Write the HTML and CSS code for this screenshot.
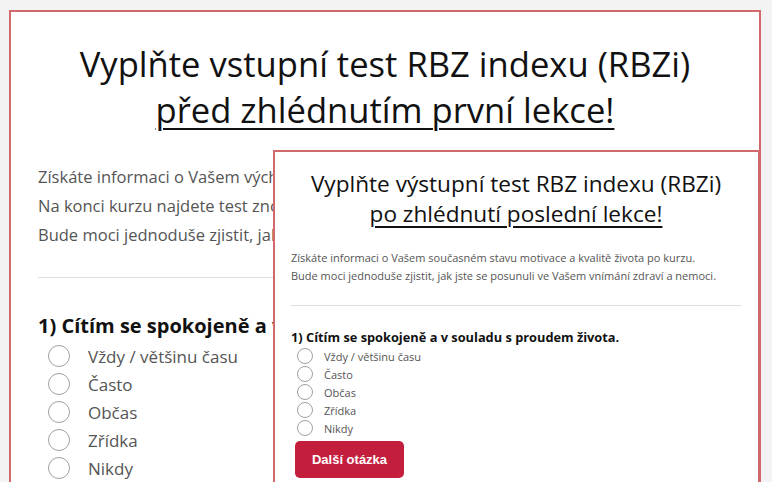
FILE: index.html
```html
<!DOCTYPE html>
<html lang="cs">
<head>
    <meta charset="UTF-8">
    <meta name="viewport" content="width=device-width, initial-scale=1.0">
    <title>RBZ index</title>
    <link rel="stylesheet" href="styles.css">
</head>
<body>
    <div class="page">
        <div class="card card-big">
            <h1 class="title">Vyplňte vstupní test RBZ indexu (RBZi)<br><u>před zhlédnutím první lekce!</u></h1>
            <p class="intro">
                Získáte informaci o Vašem výchozím stavu motivace a kvalitě života.<br>
                Na konci kurzu najdete test znovu a porovnáte výsledky.<br>
                Bude moci jednoduše zjistit, jak jste se posunuli ve Vašem vnímání zdraví a nemoci.
            </p>
            <hr class="divider">
            <h3 class="question">1) Cítím se spokojeně a v souladu s proudem života.</h3>
            <ul class="options">
                <li><span class="radio"></span>Vždy / většinu času</li>
                <li><span class="radio"></span>Často</li>
                <li><span class="radio"></span>Občas</li>
                <li><span class="radio"></span>Zřídka</li>
                <li><span class="radio"></span>Nikdy</li>
            </ul>
        </div>

        <div class="card card-small">
            <h1 class="title">Vyplňte výstupní test RBZ indexu (RBZi)<br><u>po zhlédnutí poslední lekce!</u></h1>
            <p class="intro">
                Získáte informaci o Vašem současném stavu motivace a kvalitě života po kurzu.<br>
                Bude moci jednoduše zjistit, jak jste se posunuli ve Vašem vnímání zdraví a nemoci.
            </p>
            <hr class="divider">
            <h3 class="question">1) Cítím se spokojeně a v souladu s proudem života.</h3>
            <ul class="options">
                <li><span class="radio"></span>Vždy / většinu času</li>
                <li><span class="radio"></span>Často</li>
                <li><span class="radio"></span>Občas</li>
                <li><span class="radio"></span>Zřídka</li>
                <li><span class="radio"></span>Nikdy</li>
            </ul>
            <button class="next-btn">Další otázka</button>
        </div>
    </div>
</body>
</html>
```

FILE: styles.css
```css
body {
    font-family: 'Open Sans', 'Noto Sans', sans-serif;
    background: #f3f3f3;
    color: #555555;
    margin: 0;
    height: 482px;
    overflow: hidden;
}

.page {
    position: relative;
    padding: 10px 11px 0 9px;
}

.card {
    background: #ffffff;
    border: 2px solid #d0686c;
    padding: 29px 27px 40px 27px;
    height: 600px;
}

.title {
    font-size: 34.6px;
    font-weight: 400;
    line-height: 46px;
    color: #111111;
    text-align: center;
    margin: 0 0 29px 0;
}

.title u {
    text-decoration-thickness: 2px;
    text-underline-offset: 5px;
}

.intro {
    font-size: 16.5px;
    line-height: 29px;
    margin: 0 0 28px 0;
    white-space: nowrap;
}

.divider {
    border: none;
    border-top: 1px solid #dddddd;
    margin: 0 0 34px 0;
}

.question {
    font-size: 20px;
    font-weight: 700;
    line-height: 28px;
    color: #111111;
    margin: 0 0 2px 0;
    white-space: nowrap;
}

.options {
    list-style: none;
    margin: 0;
    padding: 0 0 0 10px;
}

.options li {
    display: flex;
    align-items: center;
    height: 28px;
    font-size: 17px;
}

.radio {
    width: 20px;
    height: 20px;
    border: 1.5px solid #a0a0a0;
    border-radius: 50%;
    margin-right: 18px;
    flex-shrink: 0;
}

/* second screenshot laid over the first */
.card-small {
    position: absolute;
    left: 273px;
    top: 150px;
    width: 450px;
    height: 400px;
    padding: 17px 17px 0 16px;
    overflow: hidden;
}

.card-small .title {
    font-size: 22.6px;
    line-height: 30px;
    margin-bottom: 20px;
}

.card-small .title u {
    text-decoration-thickness: 1.5px;
    text-underline-offset: 4px;
}

.card-small .intro {
    font-size: 11px;
    line-height: 18px;
    margin-bottom: 20px;
}

.card-small .divider {
    margin-bottom: 22px;
}

.card-small .question {
    font-size: 12.8px;
    line-height: 18px;
    margin-bottom: 1px;
}

.card-small .options {
    padding-left: 6px;
}

.card-small .options li {
    height: 18px;
    font-size: 11px;
}

.card-small .radio {
    width: 14px;
    height: 14px;
    border-width: 1px;
    margin-right: 11px;
}

.next-btn {
    margin-top: 4px;
    margin-left: 4px;
    width: 109px;
    height: 37px;
    background: #c41e3d;
    color: #ffffff;
    border: none;
    border-radius: 5px;
    font-family: 'Liberation Sans', Arial, sans-serif;
    font-size: 13px;
    font-weight: 700;
}
```
